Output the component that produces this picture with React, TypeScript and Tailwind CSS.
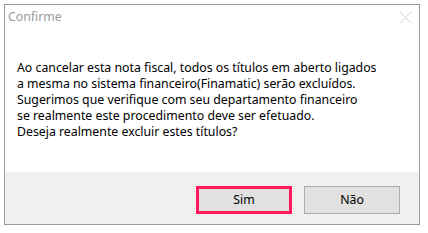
import React from "react";

export default function App() {
  const font = { fontFamily: '"Noto Sans", "Open Sans", sans-serif' };
  return (
    <div className="w-[428px] h-[233px] bg-white pt-[4px] pl-[4px]" style={font}>
      <div className="w-[416px] h-[221px] border border-[#9a9a9a] flex flex-col bg-white">
        <div className="h-[26px] flex items-start justify-between pl-[3px] pr-[7px] pt-[4px]">
          <span className="text-[12.3px] leading-[16px] text-[#9b9b9b]">Confirme</span>
          <svg width="13" height="13" viewBox="0 0 13 13" className="mt-[2px]">
            <path d="M0.5 0.5 L12.5 12.5 M12.5 0.5 L0.5 12.5" stroke="#d2d2d2" strokeWidth="1" fill="none" />
          </svg>
        </div>
        <div className="flex-1 pl-[12px] pt-[29px] text-[12.3px] leading-[16px] text-black whitespace-nowrap">
          <div>Ao cancelar esta nota fiscal, todos os títulos em aberto ligados</div>
          <div>a mesma no sistema financeiro(Finamatic) serão excluídos.</div>
          <div>Sugerimos que verifique com seu departamento financeiro</div>
          <div>se realmente este procedimento deve ser efetuado.</div>
          <div>Deseja realmente excluir estes títulos?</div>
        </div>
        <div className="h-[52px] bg-[#f0f0f0] flex justify-end items-start gap-[12px] pt-[14px] pr-[19px]">
          <button className="w-[96px] h-[28px] border-[3px] border-[#ff1a5e] bg-[#e1e1e1] text-[12.3px] leading-[16px] text-black">
            Sim
          </button>
          <button className="w-[96px] h-[28px] border border-[#adadad] bg-[#e1e1e1] text-[12.3px] leading-[16px] text-black">
            Não
          </button>
        </div>
      </div>
    </div>
  );
}
